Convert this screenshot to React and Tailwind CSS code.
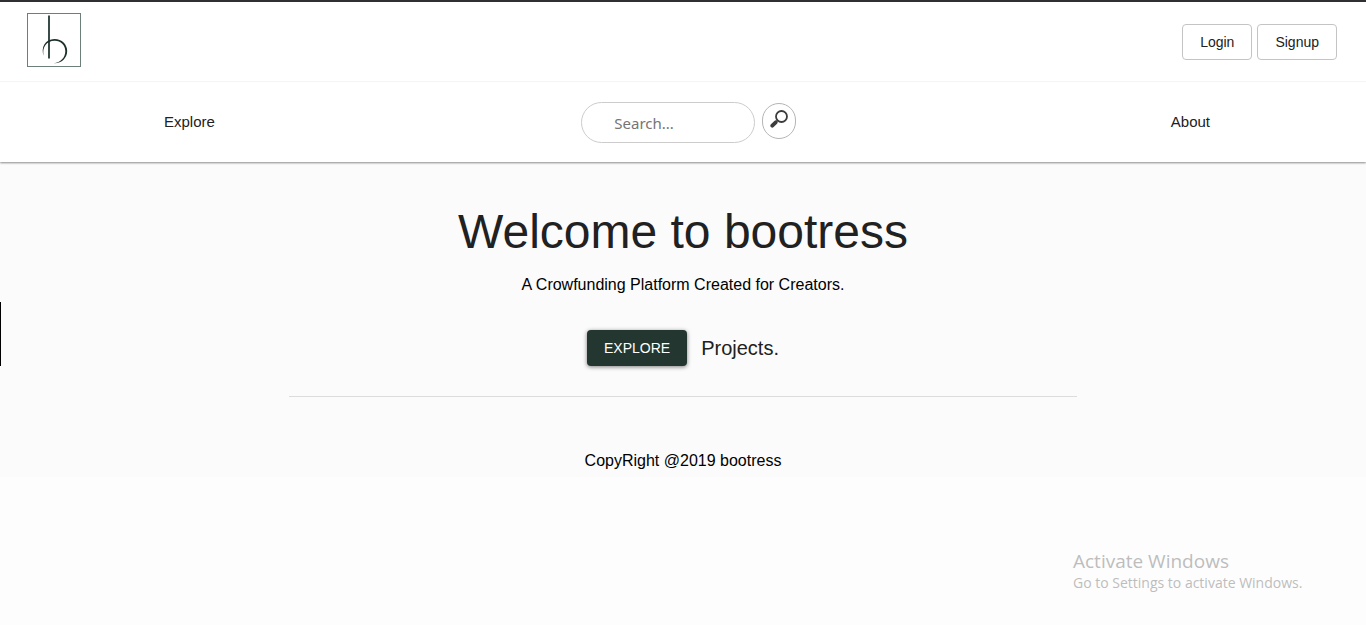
function Logo() {
  return (
    <svg viewBox="0 0 54 54" className="size-[54px]" role="img" aria-label="bootress">
      <rect x="0.5" y="0.5" width="53" height="53" fill="#fff" stroke="#6c7f79" />
      <path d="M22 2.5V45.5" stroke="#243832" strokeWidth="1.8" fill="none" />
      <path
        d="M16.8 43C13.5 35 18 26 27.500 26C35 26 40.200 31.500 40.200 38C40.200 45 34.500 50.500 27 50.200C33.500 49.500 38.300 44.500 38.300 38.200C38.300 32.200 33.800 27.800 27.800 27.800C19.500 27.800 14.600 34.500 16.800 43Z"
        fill="#1d302b"
      />
    </svg>
  );
}

function SearchIcon() {
  return (
    <svg viewBox="0 0 18 18" className="size-[18px]" aria-hidden="true">
      <circle cx="11.500" cy="6.500" r="5.500" fill="none" stroke="#3c3c3c" strokeWidth="1.800" />
      <path d="M7.700 10.300L6 12" stroke="#3c3c3c" strokeWidth="1.500" />
      <path d="M5.700 12.300L2.300 15.700" stroke="#3c3c3c" strokeWidth="3.800" strokeLinecap="round" />
    </svg>
  );
}

function OutlinedButton({ children }) {
  return (
    <button
      type="button"
      className="h-9 rounded border border-[#c4c4c4] px-[17px] text-sm text-[#212121]"
    >
      {children}
    </button>
  );
}

export default function App() {
  return (
    <div className="relative min-h-screen bg-[#fdfdfd] font-['Liberation_Sans',Arial,sans-serif] text-[#212121]">
      <header className="relative border-t-2 border-[#303033] bg-white shadow-[0_1px_2px_rgba(0,0,0,0.45)]">
        <div className="flex h-20 items-center justify-between border-b border-[#f5f5f5] pr-[29px] pl-[27px]">
          <a href="#home" className="-mt-1">
            <Logo />
          </a>
          <div className="flex gap-[5px]">
            <OutlinedButton>Login</OutlinedButton>
            <OutlinedButton>Signup</OutlinedButton>
          </div>
        </div>
        <nav className="flex h-20 items-center justify-between pr-[156px] pl-[164px] text-[15px]">
          <a href="#explore">Explore</a>
          <form className="mr-2 flex items-start gap-[7px]" onSubmit={(e) => e.preventDefault()}>
            <input
              type="search"
              aria-label="Search"
              placeholder="Search..."
              className="h-[41px] w-[174px] rounded-full border border-[#cccccc] bg-white px-8 pt-0.5 font-['Noto_Sans',sans-serif] text-[15px] placeholder:text-[#757575]"
            />
            <button
              type="submit"
              aria-label="Submit search"
              className="mt-px flex h-9 w-[34px] items-center justify-center rounded-full border border-[#b5b5b5] pb-1"
            >
              <SearchIcon />
            </button>
          </form>
          <a href="#about">About</a>
        </nav>
      </header>

      <main className="flex flex-col items-center bg-[#fbfbfb] px-4 pt-[42px] pb-1 text-center">
        <h1 className="text-5xl leading-[56px]">Welcome to bootress</h1>
        <p className="mt-[13px] text-base text-black">A Crowfunding Platform Created for Creators.</p>
        <div className="mt-[33px] flex items-center gap-[14px]">
          <button
            type="button"
            className="h-9 rounded bg-[#243630] px-[17px] text-sm text-white shadow-[0_1px_4px_rgba(0,0,0,0.5)]"
          >
            EXPLORE
          </button>
          <span className="text-xl">Projects.</span>
        </div>
        <hr className="mt-[30px] w-full max-w-[788px] border-[#dcdcdc]" />
        <footer className="mt-[52px] text-base text-black">CopyRight @2019 bootress</footer>
      </main>

      <div className="absolute top-[302px] left-0 h-16 w-px bg-black" />
      <aside className="absolute right-[57px] bottom-8 w-[236px] font-['Open_Sans',sans-serif] whitespace-nowrap text-[#bdbdbd]">
        <p className="text-[19px] leading-6">Activate Windows</p>
        <p className="text-sm leading-5">Go to Settings to activate Windows.</p>
      </aside>
    </div>
  );
}
